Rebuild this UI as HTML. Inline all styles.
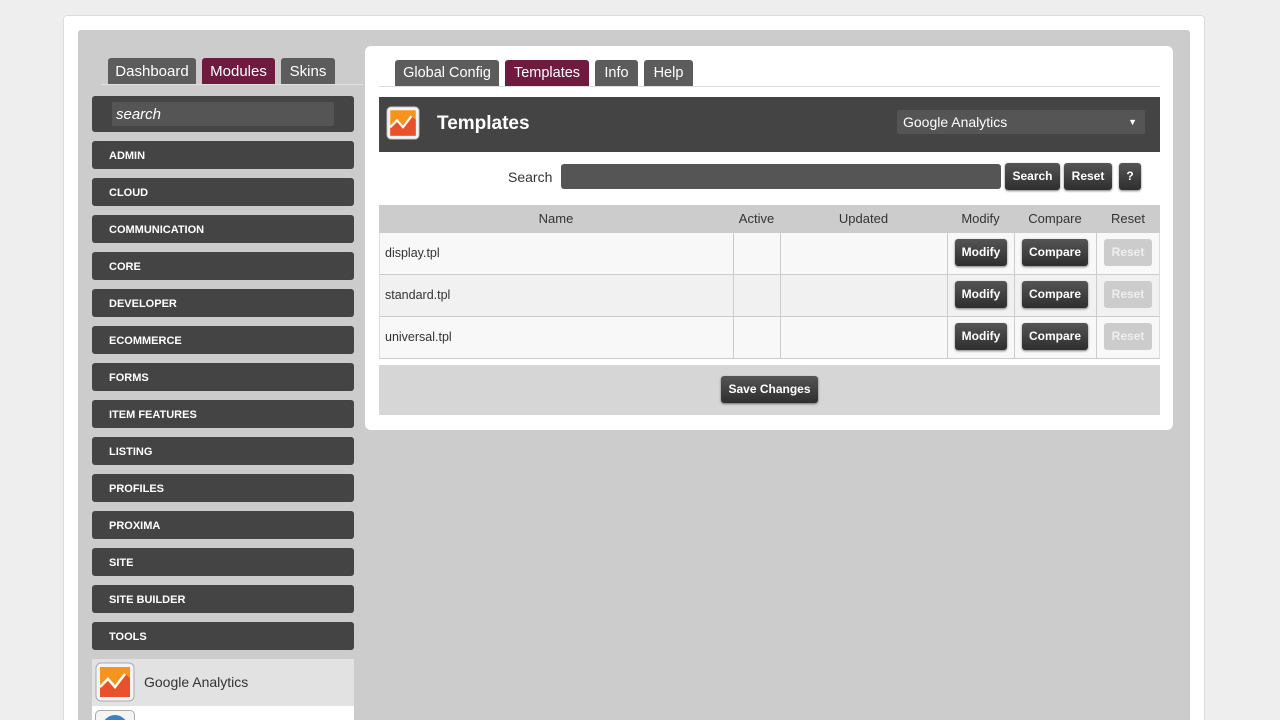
<!DOCTYPE html>
<html style="width:1280px;height:720px;overflow:hidden"><head><style>
*{box-sizing:border-box;margin:0;padding:0}
body{width:1280px;height:720px;overflow:hidden;background:#eee;font-family:"Liberation Sans",sans-serif;position:relative}
.a{position:absolute}
.tab{position:absolute;height:26px;background:#5c5c5c;color:#fff;font-size:15px;line-height:26px;text-align:center;border-radius:3px 3px 0 0}
.tab.on{background:#6e1b3f}
.cat{position:absolute;left:92px;width:262px;height:28px;background:#444;border-radius:3px;color:#fff;font-size:11px;font-weight:bold;line-height:30px;padding-left:17px}
.btn{position:absolute;background:linear-gradient(#555,#2e2e2e);color:#fff;font-weight:bold;font-size:12px;text-align:center;border-radius:3px;box-shadow:0 1px 2px rgba(0,0,0,.5);height:27px;line-height:27px}
.btn.dis{background:#ccc;color:#eee;box-shadow:none}
.th{position:absolute;top:205px;height:28px;line-height:28px;font-size:13px;color:#333;text-align:center}
.row{position:absolute;left:379px;width:781px;height:42px;border-bottom:1px solid #ccc;border-left:1px solid #ddd;border-right:1px solid #ddd}
.vl{position:absolute;top:233px;width:1px;height:125px;background:#ccc}
.nm{position:absolute;left:5px;top:0;line-height:40px;font-size:12.5px;color:#333}
</style></head><body>
<div class="a" style="left:63px;top:15px;width:1142px;height:720px;background:#fff;border:1px solid #ddd;border-radius:4px"></div>
<div class="a" style="left:78px;top:30px;width:1112px;height:700px;background:#ccc;border-radius:3px"></div>

<div class="tab" style="left:108px;top:58px;width:88px;line-height:27px">Dashboard</div>
<div class="tab on" style="left:202px;top:58px;width:73px;line-height:27px">Modules</div>
<div class="tab" style="left:281px;top:58px;width:54px;line-height:27px">Skins</div>
<div class="a" style="left:101px;top:84px;width:262px;height:1px;background:#e0e0e0"></div>
<div class="a" style="left:92px;top:96px;width:262px;height:36px;background:#444;border-radius:3px"></div>
<div class="a" style="left:112px;top:102px;width:222px;height:24px;background:#555;border-radius:2px;color:#fff;font-style:italic;font-size:15px;line-height:25px;padding-left:4px">search</div>

<div class="cat" style="top:141px">ADMIN</div>
<div class="cat" style="top:178px">CLOUD</div>
<div class="cat" style="top:215px">COMMUNICATION</div>
<div class="cat" style="top:252px">CORE</div>
<div class="cat" style="top:289px">DEVELOPER</div>
<div class="cat" style="top:326px">ECOMMERCE</div>
<div class="cat" style="top:363px">FORMS</div>
<div class="cat" style="top:400px">ITEM FEATURES</div>
<div class="cat" style="top:437px">LISTING</div>
<div class="cat" style="top:474px">PROFILES</div>
<div class="cat" style="top:511px">PROXIMA</div>
<div class="cat" style="top:548px">SITE</div>
<div class="cat" style="top:585px">SITE BUILDER</div>
<div class="cat" style="top:622px">TOOLS</div>
<div class="a" style="left:92px;top:659px;width:262px;height:47px;background:#e2e2e2"></div>
<div class="a" style="left:92px;top:706px;width:262px;height:20px;background:#fff"></div>
<svg class="a" style="left:95px;top:662px" width="40" height="40" viewBox="0 0 40 40"><rect x="1" y="1" width="38" height="38" rx="5" fill="#f4f4f4" stroke="#aaa"/><rect x="5" y="5" width="30" height="30" fill="#f7941d"/><path d="M5 35V25L13 17L20 25L30 12L35 16V35Z" fill="#e8512b"/><path d="M5 25L13 17L20 25L30 12" fill="none" stroke="#fff" stroke-width="2.5"/></svg>
<div class="a" style="left:144px;top:674px;font-size:14px;color:#333">Google Analytics</div>
<div class="a" style="left:95px;top:710px;width:40px;height:20px;border:1px solid #aaa;border-radius:5px;background:#f4f4f4;overflow:hidden"><div style="margin:4px 0 0 6px;width:26px;height:26px;border-radius:50%;background:#3d7fc4"></div></div>

<div class="a" style="left:365px;top:46px;width:808px;height:384px;background:#fff;border-radius:6px"></div>
<div class="tab" style="left:395px;top:60px;width:104px;font-size:14.5px;line-height:27px">Global Config</div>
<div class="tab on" style="left:505px;top:60px;width:84px;font-size:14.5px;line-height:27px">Templates</div>
<div class="tab" style="left:595px;top:60px;width:43px;font-size:14.5px;line-height:27px">Info</div>
<div class="tab" style="left:644px;top:60px;width:49px;font-size:14.5px;line-height:27px">Help</div>
<div class="a" style="left:379px;top:86px;width:781px;height:1px;background:#ddd"></div>

<div class="a" style="left:379px;top:97px;width:781px;height:55px;background:#444"></div>
<svg class="a" style="left:386px;top:106px" width="34" height="34" viewBox="0 0 40 40"><rect x="1" y="1" width="38" height="38" rx="5" fill="#f4f4f4" stroke="#aaa"/><rect x="5" y="5" width="30" height="30" fill="#f7941d"/><path d="M5 35V25L13 17L20 25L30 12L35 16V35Z" fill="#e8512b"/><path d="M5 25L13 17L20 25L30 12" fill="none" stroke="#fff" stroke-width="2.5"/></svg>
<div class="a" style="left:437px;top:113px;color:#fff;font-size:19px;font-weight:bold">Templates</div>
<div class="a" style="left:897px;top:110px;width:248px;height:24px;background:#555;border-radius:2px;color:#fff;font-size:14px;line-height:24px;padding-left:6px">Google Analytics<span style="position:absolute;right:8px;font-size:9px">▼</span></div>

<div class="a" style="left:508px;top:169px;font-size:14px;color:#333">Search</div>
<div class="a" style="left:561px;top:164px;width:440px;height:25px;background:#555;border-radius:3px"></div>
<div class="btn" style="left:1005px;top:163px;width:55px">Search</div>
<div class="btn" style="left:1064px;top:163px;width:48px">Reset</div>
<div class="btn" style="left:1119px;top:163px;width:22px">?</div>

<div class="a" style="left:379px;top:205px;width:781px;height:28px;background:#ccc"></div>
<div class="th" style="left:379px;width:354px">Name</div>
<div class="th" style="left:733px;width:47px">Active</div>
<div class="th" style="left:780px;width:167px">Updated</div>
<div class="th" style="left:947px;width:67px">Modify</div>
<div class="th" style="left:1014px;width:82px">Compare</div>
<div class="th" style="left:1096px;width:64px">Reset</div>
<div class="row" style="top:233px;background:#f8f8f8"><div class="nm">display.tpl</div></div>
<div class="row" style="top:275px;background:#f1f1f1"><div class="nm">standard.tpl</div></div>
<div class="row" style="top:317px;background:#f8f8f8"><div class="nm">universal.tpl</div></div>
<div class="vl" style="left:733px"></div><div class="vl" style="left:780px"></div><div class="vl" style="left:947px"></div><div class="vl" style="left:1014px"></div><div class="vl" style="left:1096px"></div>
<div class="btn" style="left:955px;top:239px;width:52px">Modify</div>
<div class="btn" style="left:1022px;top:239px;width:66px">Compare</div>
<div class="btn dis" style="left:1104px;top:239px;width:48px">Reset</div>
<div class="btn" style="left:955px;top:281px;width:52px">Modify</div>
<div class="btn" style="left:1022px;top:281px;width:66px">Compare</div>
<div class="btn dis" style="left:1104px;top:281px;width:48px">Reset</div>
<div class="btn" style="left:955px;top:323px;width:52px">Modify</div>
<div class="btn" style="left:1022px;top:323px;width:66px">Compare</div>
<div class="btn dis" style="left:1104px;top:323px;width:48px">Reset</div>

<div class="a" style="left:379px;top:365px;width:781px;height:50px;background:#d6d6d6"></div>
<div class="btn" style="left:721px;top:376px;width:97px">Save Changes</div>
</body></html>
